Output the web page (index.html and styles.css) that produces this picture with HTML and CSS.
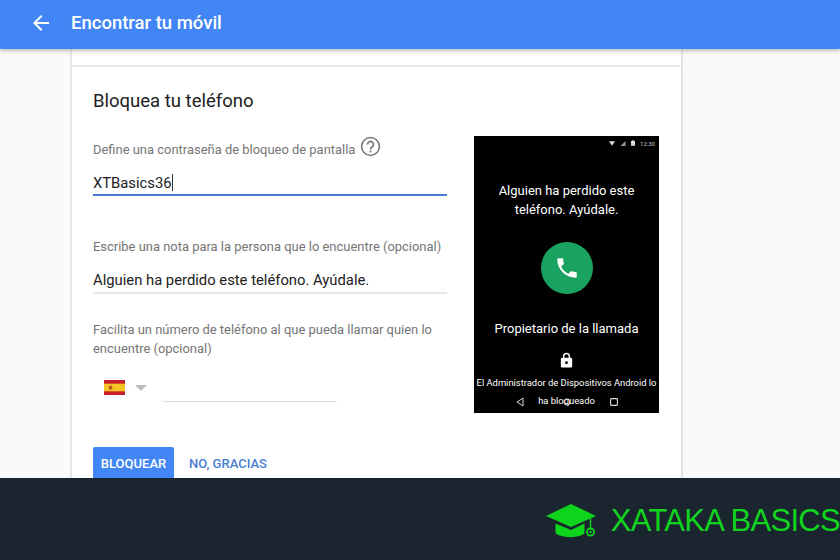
FILE: index.html
```html
<!DOCTYPE html>
<html lang="es">
<head>
<meta charset="utf-8">
<title>Encontrar tu móvil</title>
<link rel="stylesheet" href="styles.css">
</head>
<body>
<div class="app">
  <header class="topbar">
    <svg class="back" viewBox="0 0 24 24" width="24" height="24"><path d="M20 11H7.8l5.6-5.6L12 4l-8 8 8 8 1.4-1.4L7.8 13H20z" fill="#fff"/></svg>
    <h1 class="title">Encontrar tu móvil</h1>
  </header>
  <main class="main">
    <div class="card">
      <div class="card-stub"></div>
      <section class="lock">
        <div class="form">
          <h2 class="heading">Bloquea tu teléfono</h2>
          <div class="label-row">
            <span class="label">Define una contraseña de bloqueo de pantalla</span>
            <svg class="help" viewBox="0 0 24 24" width="21" height="21"><circle cx="12" cy="12" r="10.2" fill="none" stroke="#757575" stroke-width="1.8"/><path d="M8.6 9.6a3.4 3.4 0 1 1 5.5 2.7c-1.2 1-2.1 1.6-2.1 3.2" fill="none" stroke="#757575" stroke-width="1.9"/><rect x="11" y="16.8" width="2" height="2" fill="#757575"/></svg>
          </div>
          <div class="field field-active"><span class="value">XTBasics36</span><span class="caret"></span></div>
          <div class="label note-label">Escribe una nota para la persona que lo encuentre (opcional)</div>
          <div class="field field-idle"><span class="value">Alguien ha perdido este teléfono. Ayúdale.</span></div>
          <div class="label phone-label">Facilita un número de teléfono al que pueda llamar quien lo encuentre (opcional)</div>
          <div class="phone-row">
            <svg class="flag" viewBox="0 0 21 15" width="21" height="15"><rect width="21" height="15" fill="#c8202a"/><rect y="3.7" width="21" height="7.6" fill="#f6c324"/><rect x="5" y="5.8" width="3.2" height="3.6" rx="1" fill="#b5502a"/></svg>
            <span class="arrow"></span>
            <span class="phone-input"></span>
          </div>
          <div class="actions">
            <span class="btn-primary">BLOQUEAR</span>
            <span class="btn-text">NO, GRACIAS</span>
          </div>
        </div>
        <aside class="phone">
          <div class="status">
            <svg viewBox="0 0 8 6" width="6" height="5"><path d="M0 0h8L4 6z" fill="#ddd"/></svg>
            <svg viewBox="0 0 6 6" width="6" height="5"><path d="M6 0v6H0z" fill="#999"/></svg>
            <svg viewBox="0 0 5 7" width="4" height="6"><path d="M0 1h1.500V0h2v1H5v6H0z" fill="#ddd"/></svg>
            <span class="clock">12:30</span>
          </div>
          <div class="msg">Alguien ha perdido este teléfono. Ayúdale.</div>
          <div class="call">
            <svg viewBox="0 0 24 24" width="26" height="26"><path d="M6.6 10.800c1.400 2.800 3.800 5.100 6.600 6.600l2.200-2.200c.3-.3.700-.4 1-.2 1.100.4 2.300.6 3.600.6.600 0 1 .4 1 1V20c0 .6-.4 1-1 1C10.600 21 3 13.400 3 4c0-.6.400-1 1-1h3.500c.6 0 1 .4 1 1 0 1.300.2 2.500.6 3.600.1.300 0 .7-.2 1z" fill="#fff"/></svg>
          </div>
          <div class="owner">Propietario de la llamada</div>
          <svg class="padlock" viewBox="0 0 24 24" width="17" height="19"><path d="M18 8h-1V6A5 5 0 0 0 7 6v2H6a2 2 0 0 0-2 2v10c0 1.100.9 2 2 2h12a2 2 0 0 0 2-2V10a2 2 0 0 0-2-2zM9 6a3 3 0 0 1 6 0v2H9zm3 11a2 2 0 1 1 0-4 2 2 0 0 1 0 4z" fill="#fff"/></svg>
          <div class="admin">El Administrador de Dispositivos Android lo ha bloqueado</div>
          <div class="navbar">
            <svg viewBox="0 0 8 10" width="8" height="10"><path d="M7 1v8L1 5z" fill="none" stroke="#ddd" stroke-width="1"/></svg>
            <svg viewBox="0 0 8 8" width="8" height="8"><circle cx="4" cy="4" r="3" fill="none" stroke="#ddd" stroke-width="1.200"/></svg>
            <svg viewBox="0 0 8 8" width="8" height="8"><rect x=".6" y=".6" width="6.800" height="6.800" rx=".6" fill="none" stroke="#ddd" stroke-width="1.100"/></svg>
          </div>
        </aside>
      </section>
    </div>
  </main>
  <footer class="footer">
    <svg class="logo" viewBox="0 0 52 36" width="52" height="36"><path d="M0 13 25 1l25 12-25 11z" fill="#0fd41c"/><path d="M9.500 20.500v9.500c5 5.500 25 5.500 29 0v-9.500L25 27z" fill="#0fd41c"/><path d="M44.500 15.500V27" stroke="#0fd41c" stroke-width="1.500"/><circle cx="44.500" cy="29" r="3.600" fill="none" stroke="#0fd41c" stroke-width="1.800"/><circle cx="44.500" cy="29" r="1.200" fill="#0fd41c"/></svg>
    <span class="brand">XATAKA BASICS</span>
  </footer>
</div>
</body>
</html>
```
FILE: styles.css
```css
* { box-sizing: border-box; }
html, body { margin: 0; height: 100%; overflow: hidden; }
body { font-family: Roboto, "Liberation Sans", sans-serif; background: #fafafa; }
.app { width: 840px; height: 560px; display: flex; flex-direction: column; }
.topbar { height: 49px; flex: none; background: #4285f4; display: flex; align-items: center; padding: 0 0 3px 29px; gap: 18px; box-shadow: 0 1px 5px rgba(0,0,0,.35); position: relative; z-index: 1; }
.back { flex: none; }
.title { margin: 0; color: #fff; font-size: 18.5px; font-weight: 500; line-height: 24px; }
.main { flex: 1; min-height: 0; overflow: hidden; padding-left: 70px; }
.card { width: 613px; height: 100%; background: #fff; border-left: 2px solid #e8e8e8; border-right: 2px solid #e4e4e4; }
.card-stub { height: 18px; border-bottom: 2px solid #ebebeb; }
.lock { display: flex; padding: 22px 0 0 21px; }
.form { width: 354px; flex: none; }
.heading { margin: 0; font-size: 18.5px; font-weight: 400; line-height: 24px; color: #212121; }
.label { font-size: 12.95px; line-height: 19px; color: #757575; }
.label-row { display: flex; align-items: flex-end; gap: 5px; margin-top: 22px; height: 24px; }
.help { flex: none; margin-bottom: 2px; }
.field { display: flex; align-items: center; }
.value { font-size: 14.8px; color: #212121; }
.field-active { margin-top: 12px; height: 25px; border-bottom: 2px solid #4a7fd0; }
.caret { width: 1px; height: 17px; background: #333; }
.note-label { margin-top: 41px; }
.field-idle { margin-top: 11px; height: 27px; border-bottom: 2px solid #e8e8e8; }
.phone-label { margin-top: 26px; }
.phone-row { display: flex; align-items: center; height: 25px; margin-top: 17px; padding-left: 11px; }
.flag { flex: none; }
.arrow { width: 0; height: 0; margin-left: 10px; border-left: 6px solid transparent; border-right: 6px solid transparent; border-top: 6px solid #bdbdbd; }
.phone-input { width: 174px; height: 22px; margin-left: 16px; border-bottom: 1px solid #dedede; align-self: flex-start; margin-top: 5px; }
.actions { display: flex; align-items: flex-start; gap: 15px; margin-top: 47px; }
.btn-primary { width: 81px; height: 34px; padding-bottom: 1px; background: #4285f4; color: #fff; border-radius: 2px; font-size: 13px; font-weight: 500; display: flex; align-items: center; justify-content: center; }
.btn-text { color: #4a7fd0; font-size: 13px; font-weight: 500; line-height: 33px; }
.phone { width: 185px; height: 277px; margin: 47px 0 0 27px; background: #000; color: #fff; display: flex; flex-direction: column; align-items: center; position: relative; flex: none; }
.status { align-self: stretch; display: flex; justify-content: flex-end; align-items: center; gap: 5px; height: 12px; padding-right: 4px; margin-top: 1px; }
.clock { font-size: 6px; color: #ccc; }
.msg { width: 150px; margin-top: 32px; text-align: center; font-size: 13px; line-height: 19px; }
.call { width: 52px; height: 52px; margin-top: 23px; border-radius: 50%; background: #1aa260; display: flex; align-items: center; justify-content: center; }
.owner { margin-top: 25px; font-size: 13px; line-height: 19px; }
.padlock { margin-top: 13px; }
.admin { width: 183px; margin-top: 4px; text-align: center; font-size: 9.4px; line-height: 18px; }
.navbar { position: absolute; left: 42px; bottom: 6px; width: 102px; display: flex; justify-content: space-between; align-items: center; }
.footer { height: 82px; flex: none; background: #1b2530; display: flex; align-items: center; justify-content: flex-end; padding: 3px 0 0 0; gap: 13px; position: relative; z-index: 2; overflow: hidden; }
.logo { flex: none; }
.brand { color: #11d41f; font-family: "Liberation Sans", Arial, sans-serif; font-size: 31px; letter-spacing: -.7px; white-space: nowrap; }
```
